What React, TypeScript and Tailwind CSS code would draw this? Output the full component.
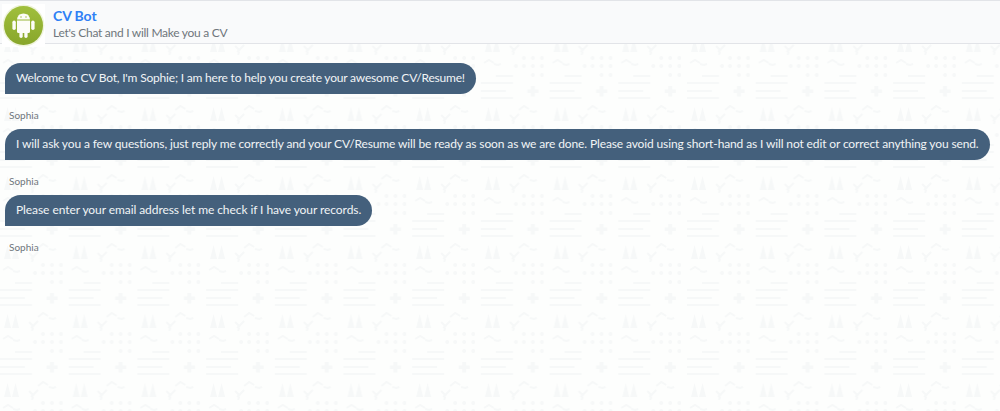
function Android() {
  return (
    <div className="flex h-[43px] w-[43px] shrink-0 items-center justify-center bg-white">
      <svg viewBox="0 0 43 43" className="h-[43px] w-[43px]">
        <defs>
          <linearGradient id="droid" x1="0" y1="0" x2="0" y2="1">
            <stop offset="0" stopColor="#a0bf3c" />
            <stop offset="1" stopColor="#88a62b" />
          </linearGradient>
        </defs>
        <circle cx="21.5" cy="21.5" r="21" fill="#eff4dc" />
        <circle cx="21.5" cy="21.5" r="19.5" fill="url(#droid)" />
        <g fill="#fdfdf8">
          <path d="M15 15.5a6.5 6 0 0 1 13 0z" />
          <path d="M17.6 10l1.4 2M25.4 10l-1.4 2" stroke="#fdfdf8" strokeWidth="0.7" />
          <path d="M15 16.5h13v11a1.5 1.5 0 0 1-1.5 1.5h-10a1.5 1.5 0 0 1-1.5-1.5z" />
          <rect x="10.4" y="16.5" width="3.4" height="9.5" rx="1.7" />
          <rect x="29.2" y="16.5" width="3.4" height="9.5" rx="1.7" />
          <rect x="17.4" y="27" width="3.3" height="7" rx="1.65" />
          <rect x="22.3" y="27" width="3.3" height="7" rx="1.65" />
        </g>
        <circle cx="19" cy="13" r="0.7" fill="#93b232" />
        <circle cx="24" cy="13" r="0.7" fill="#93b232" />
      </svg>
    </div>
  );
}

function Pattern() {
  return (
    <svg className="absolute inset-0 h-full w-full" aria-hidden="true">
      <defs>
        <pattern id="tile" x="0" y="33" width="68.7" height="69" patternUnits="userSpaceOnUse">
          <g fill="#f6f8f8">
            <path d="M4 19l3.5-14 3.5 14zM12 19l3.5-14 3.5 14z" />
            <rect x="15" y="42" width="17" height="2" />
            <rect x="0" y="49" width="32" height="2" />
            <rect x="0" y="57" width="25" height="2" />
            <rect x="0" y="64" width="32" height="2" />
            <path d="M50 53h4v3.5h3.5v3.5h-3.5v3.5h-4v-3.5h-3.5v-3.5h3.5z" />
            <circle cx="43" cy="25" r="2" /><circle cx="52" cy="25" r="2" /><circle cx="61" cy="25" r="2" />
            <circle cx="35" cy="33" r="2" /><circle cx="43" cy="33" r="2" /><circle cx="52" cy="33" r="2" /><circle cx="61" cy="33" r="2" />
            <circle cx="52" cy="42" r="2" /><circle cx="61" cy="42" r="2" />
          </g>
          <g stroke="#f6f8f8" strokeWidth="2" fill="none">
            <path d="M29 13l5 5M38 12l-7 7M33 19l-1 3" />
            <path d="M38 8l5-4 5 3M49 9l4 1 3-1" />
            <path d="M3 30l5-3 5 3M13 31l4 1 3-1" />
          </g>
        </pattern>
      </defs>
      <rect width="100%" height="100%" fill="url(#tile)" />
    </svg>
  );
}

const messages = [
  { text: "Welcome to CV Bot, I'm Sophie; I am here to help you create your awesome CV/Resume!", fit: "tracking-[-0.2px]" },
  { text: "I will ask you a few questions, just reply me correctly and your CV/Resume will be ready as soon as we are done. Please avoid using short-hand as I will not edit or correct anything you send.", fit: "tracking-[-0.127px]" },
  { text: "Please enter your email address let me check if I have your records.", fit: "tracking-[-0.075px]" },
];

export default function App() {
  return (
    <div className="relative h-[411px] w-[1000px] overflow-hidden bg-[#fdfefd] font-['Lato','Open_Sans',sans-serif]">
      <Pattern />
      <div className="relative flex flex-col">
        <header className="flex h-[44px] items-start gap-[8px] border-y border-[#e2e4e8] bg-[#f9fafb] pl-[2px]">
          <div className="mt-[3px]">
            <Android />
          </div>
          <div className="flex flex-col pt-[5px]">
            <div className="text-[14px] leading-[20px] font-bold tracking-[-0.1px] text-[#2f80f5]">CV Bot</div>
            <div className="text-[12px] leading-[14px] tracking-[-0.28px] text-[#6f767c]">Let's Chat and I will Make you a CV</div>
          </div>
        </header>
        <main className="flex flex-col items-start pt-[19px] pl-[5px]">
          {messages.map((m) => (
            <div key={m.text} className="flex h-[66px] flex-col items-start">
              <div className={`flex h-[30.5px] items-center whitespace-nowrap rounded-t-[16px] rounded-br-[16px] bg-[#44607c] px-[11px] text-[12px] text-[#f1f4f6] ${m.fit}`}>
                {m.text}
              </div>
              <div className="mt-[14px] pl-[4px] text-[10px] leading-[14px] text-[#6f767c]">Sophia</div>
            </div>
          ))}
        </main>
      </div>
    </div>
  );
}
